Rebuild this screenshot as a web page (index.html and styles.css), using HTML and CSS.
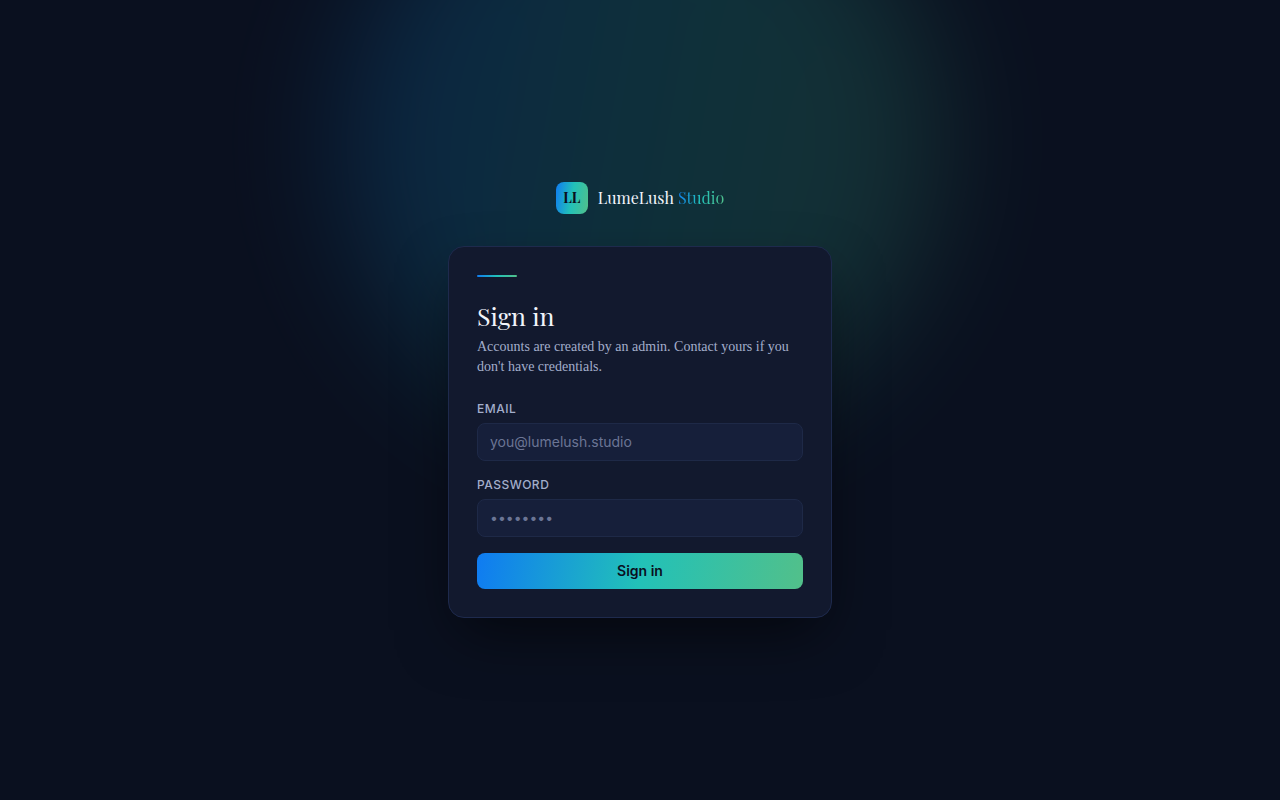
FILE: index.html
```html
<!DOCTYPE html>
<html lang="en">
<head>
  <meta charset="UTF-8">
  <meta name="viewport" content="width=device-width, initial-scale=1.0">
  <title>LumeLush Studio</title>
  <link rel="stylesheet" href="styles.css">
</head>
<body>
  <div class="glow"></div>

  <main class="login">
    <div class="brand">
      <span class="brand-mark">LL</span>
      <span class="brand-name">LumeLush <span class="brand-accent">Studio</span></span>
    </div>

    <div class="card">
      <div class="card-rule"></div>
      <h1 class="card-title">Sign in</h1>
      <p class="card-description">Accounts are created by an admin. Contact yours if you don't have credentials.</p>

      <form class="form">
        <div class="form-group">
          <label for="email">Email</label>
          <input id="email" type="email" placeholder="you@lumelush.studio" required>
        </div>
        <div class="form-group">
          <label for="password">Password</label>
          <input id="password" type="password" placeholder="••••••••" required>
        </div>
        <button type="submit">Sign in</button>
      </form>
    </div>
  </main>
</body>
</html>
```

FILE: styles.css
```css
* {
  box-sizing: border-box;
}
body {
  --brand: linear-gradient(100deg, #0f7bf2 0%, #22c1b8 50%, #52c08a 100%);
  margin: 0;
  min-height: 100vh;
  display: flex;
  justify-content: center;
  align-items: center;
  position: relative;
  overflow: hidden;
  background-color: #0a101f;
  color: #f1f4fb;
  font-family: Inter, sans-serif;
  font-size: 14px;
  line-height: 20px;
}
.glow {
  position: absolute;
  top: -160px;
  left: 50%;
  width: 600px;
  height: 600px;
  transform: translateX(-50%);
  border-radius: 50%;
  background: var(--brand);
  opacity: 0.18;
  filter: blur(60px);
}
.login {
  position: relative;
  width: 100%;
  max-width: 384px;
}
.brand {
  display: flex;
  justify-content: center;
  align-items: center;
  gap: 10px;
  margin-bottom: 32px;
  font-family: "Playfair Display", "Liberation Serif", serif;
}
.brand-mark {
  width: 32px;
  height: 32px;
  border-radius: 8px;
  background: var(--brand);
  color: #0a101f;
  font-weight: bold;
  line-height: 32px;
  text-align: center;
}
.brand-name {
  font-size: 16px;
}
.brand-accent {
  background: var(--brand);
  background-clip: text;
  -webkit-background-clip: text;
  color: transparent;
}
.card {
  padding: 28px;
  border: 1px solid #1e2a4d;
  border-radius: 16px;
  background-color: #12192e;
  box-shadow: 0 24px 60px -12px rgba(0, 0, 0, 0.6);
}
.card-rule {
  width: 40px;
  height: 2px;
  margin-bottom: 24px;
  border-radius: 2px;
  background: var(--brand);
}
.card-title {
  margin: 0 0 6px;
  font-family: "Playfair Display", "Liberation Serif", serif;
  font-size: 25px;
  font-weight: normal;
  line-height: 30px;
}
.card-description {
  margin: 0 0 24px;
  color: #a3aecb;
  font-family: "Liberation Serif", serif;
}
.form {
  display: flex;
  flex-direction: column;
  gap: 16px;
}
label {
  display: block;
  margin-bottom: 6px;
  color: #a3aecb;
  font-size: 12px;
  font-weight: 500;
  line-height: 16px;
  letter-spacing: 0.5px;
  text-transform: uppercase;
}
input {
  display: block;
  width: 100%;
  padding: 9px 12px;
  border: 1px solid #1e2947;
  border-radius: 8px;
  background-color: #161f3a;
  color: #f1f4fb;
  font: inherit;
  line-height: 18px;
}
input::placeholder {
  color: #6b7595;
}
button {
  height: 36px;
  border: none;
  border-radius: 8px;
  background: var(--brand);
  color: #0a101f;
  font: inherit;
  font-weight: 600;
  cursor: pointer;
}
button:hover {
  filter: brightness(1.1);
}
```
